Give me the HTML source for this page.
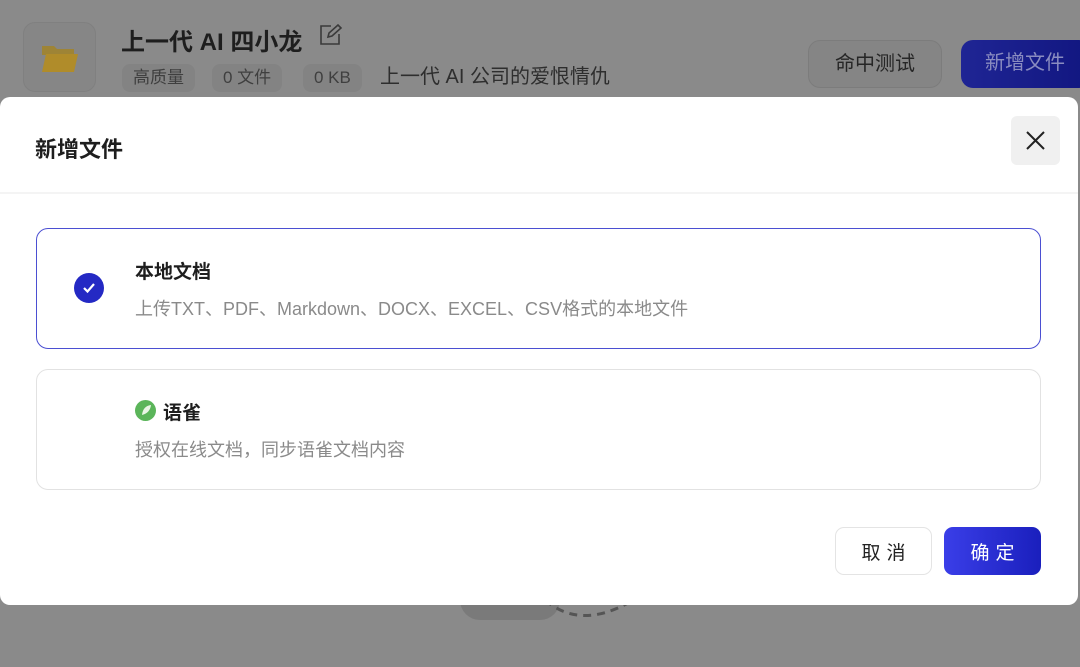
<!DOCTYPE html>
<html><head><meta charset="utf-8"><style>
*{margin:0;padding:0;box-sizing:border-box}
body{width:1080px;height:667px;overflow:hidden;background:#8a8a8a;font-family:"Liberation Sans","Noto Sans CJK SC",sans-serif;position:relative}
.abs{position:absolute}
.tag{position:absolute;top:64px;height:28px;border-radius:8px;background:#838383;color:#3f3f3f;font-size:17px;line-height:28px;padding:0 11px}
.modal{position:absolute;left:0;top:97px;width:1078px;height:508px;background:#fff;border-radius:10px}
.card{position:absolute;left:36px;width:1005px;height:121px;border-radius:12px;border:1px solid #e2e2e2}
.btn{position:absolute;top:430px;width:97px;height:48px;border-radius:9px;font-size:19px;display:flex;align-items:center;justify-content:center;letter-spacing:6px;padding-left:6px}
</style></head><body>
<div class="abs" style="left:23px;top:22px;width:73px;height:70px;border-radius:12px;background:#868686;border:1px solid #808080"></div>
<svg class="abs" style="left:40px;top:42px" width="40" height="32" viewBox="0 0 40 32"><path d="M2 4h12l3 3h17v6H2z" fill="#9e8436"/><path d="M6 12h32l-4 18H2z" fill="#b08c2a"/></svg>
<div class="abs" style="left:121px;top:22px;font-size:24px;font-weight:bold;color:#1e1e1e">上一代 AI 四小龙</div>
<svg class="abs" style="left:319px;top:24px" width="24" height="22" viewBox="0 0 24 22" fill="none" stroke="#3a3a3a" stroke-width="1.6"><path d="M12 2H2v18h18V10"/><path d="M9 13l1-4 9-8 3 3-9 8z"/></svg>
<div class="tag" style="left:122px">高质量</div>
<div class="tag" style="left:212px">0 文件</div>
<div class="tag" style="left:303px">0 KB</div>
<div class="abs" style="left:380px;top:63px;font-size:20px;color:#2e2e2e;line-height:28px">上一代 AI 公司的爱恨情仇</div>
<div class="abs" style="left:808px;top:40px;width:134px;height:48px;border-radius:12px;background:#858585;border:1px solid #7c7c7c;font-size:20px;line-height:46px;text-align:center;color:#262626">命中测试</div>
<div class="abs" style="left:961px;top:40px;width:130px;height:48px;border-radius:12px;background:linear-gradient(90deg,#1f2594,#111680);font-size:20px;line-height:46px;padding-left:24px;color:#8a8cc0">新增文件</div>
<div class="abs" style="left:460px;top:580px;width:100px;height:40px;border-radius:30px;background:#7a7a7a"></div>
<svg class="abs" style="left:540px;top:590px" width="100" height="40"><path d="M5 10 Q40 40 90 12" fill="none" stroke="#555" stroke-width="3" stroke-dasharray="8 6"/></svg>
<div class="modal">
<div class="abs" style="left:35px;top:35px;font-size:22px;font-weight:bold;color:#1e1e1e">新增文件</div>
<div class="abs" style="left:1011px;top:19px;width:49px;height:49px;border-radius:6px;background:#f0f0f0"></div>
<svg class="abs" style="left:1025px;top:33px" width="21" height="21" viewBox="0 0 21 21" stroke="#222" stroke-width="2"><path d="M2 2L19 19M19 2L2 19"/></svg>
<div class="abs" style="left:0;top:95px;width:1078px;height:2px;background:#f4f4f4"></div>
<div class="card" style="top:131px;border:1.5px solid #4b4fd2">
<div class="abs" style="left:37px;top:44px;width:30px;height:30px;border-radius:50%;background:#2429c4"></div>
<svg class="abs" style="left:45px;top:52px" width="14" height="14" viewBox="0 0 14 14" fill="none" stroke="#fff" stroke-width="2.2"><path d="M2 7l3.5 3.5L12 3"/></svg>
<div class="abs" style="left:98px;top:28px;font-size:19px;font-weight:bold;color:#1e1e1e">本地文档</div>
<div class="abs" style="left:98px;top:66px;font-size:18px;color:#8a8a8a">上传TXT、PDF、Markdown、DOCX、EXCEL、CSV格式的本地文件</div>
</div>
<div class="card" style="top:272px">
<div class="abs" style="left:98px;top:30px;width:21px;height:21px;border-radius:50%;background:#5bb55a"></div>
<svg class="abs" style="left:102px;top:33px" width="14" height="14"><path d="M3 12 Q4 3 12 2 Q11 10 3 12z" fill="#e9f5e5"/></svg>
<div class="abs" style="left:126px;top:28px;font-size:19px;font-weight:bold;color:#1e1e1e">语雀</div>
<div class="abs" style="left:98px;top:66px;font-size:18px;color:#8a8a8a">授权在线文档，同步语雀文档内容</div>
</div>
<div class="btn" style="left:835px;border:1px solid #e4e4e4;color:#222">取消</div>
<div class="btn" style="left:944px;background:linear-gradient(90deg,#3a3ee8,#1a1fbd);color:#fff">确定</div>
</div>
</body></html>
